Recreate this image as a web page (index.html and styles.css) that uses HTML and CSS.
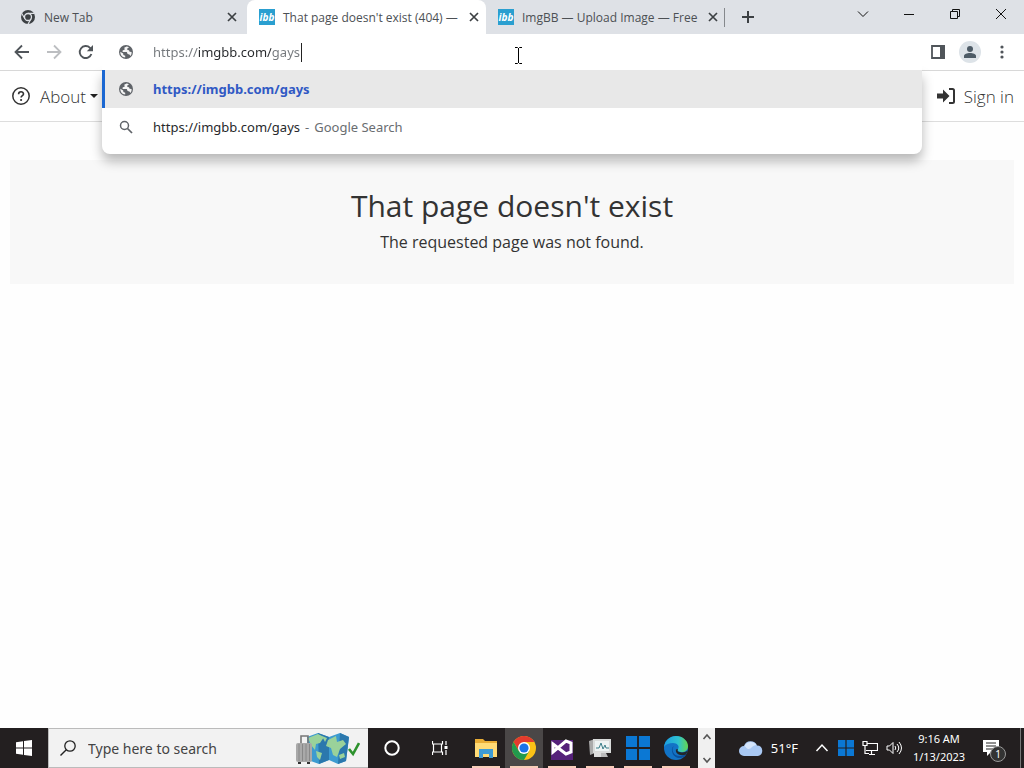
FILE: index.html
```html
<!DOCTYPE html>
<html lang="en">
<head>
<meta charset="utf-8">
<title>That page doesn't exist (404)</title>
<link rel="stylesheet" href="styles.css">
</head>
<body>
<svg class="defs" aria-hidden="true">
  <symbol id="globe" viewBox="0 0 16 16"><circle cx="8" cy="8" r="7" fill="#5f6368"/><path d="M8.6 2.4 6.2 3.8 6.8 5.6 4.6 6.4 4.6 8H8.8L9.6 10 11.4 10.4 12.6 12A5.7 5.7 0 0 0 13.6 8L11.6 7.8 11 6.2 9.4 6 9.2 4.4 11 3.4A6 6 0 0 0 8.6 2.4ZM2.3 7.8A5.7 5.7 0 0 0 7.2 13.6L7.2 11.8 5.4 11 5.2 9.6Z" fill="#f5f5f5"/></symbol>
  <symbol id="close" viewBox="0 0 16 16"><path d="m4 4 8 8m0-8-8 8" stroke="#3c4043" stroke-width="1.7"/></symbol>
  <symbol id="win11" viewBox="0 0 26 26"><path d="M0 0h12v12H0zM14 0h12v12H14zM0 14h12v12H0zM14 14h12v12H14z" fill="#0b78d4"/></symbol>
</svg>

<header class="tabstrip">
  <div class="tabs">
    <div class="tab">
      <svg class="favicon" viewBox="0 0 16 16"><circle cx="8" cy="8" r="7" fill="#3c4043"/><circle cx="8" cy="8" r="3.5" fill="#3c4043" stroke="#dee1e6" stroke-width="1.3"/><path d="M8 4.4h6.4M4.9 9.8 1.8 4.5M11.1 9.8 8 15.1" stroke="#dee1e6" stroke-width="1.1"/></svg>
      <span class="tab-title">New Tab</span>
      <button class="tab-close" aria-label="Close New Tab"><svg viewBox="0 0 16 16"><use href="#close"/></svg></button>
    </div>
    <div class="tab active">
      <span class="favicon ibb">ibb</span>
      <span class="tab-title">That page doesn't exist (404) —</span>
      <button class="tab-close" aria-label="Close tab"><svg viewBox="0 0 16 16"><use href="#close"/></svg></button>
    </div>
    <div class="tab divided">
      <span class="favicon ibb">ibb</span>
      <span class="tab-title">ImgBB — Upload Image — Free</span>
      <button class="tab-close" aria-label="Close ImgBB"><svg viewBox="0 0 16 16"><use href="#close"/></svg></button>
    </div>
    <button class="new-tab" aria-label="New tab"><svg viewBox="0 0 16 16"><path d="M8 2v12M2 8h12" stroke="#3c4043" stroke-width="2"/></svg></button>
  </div>
  <div class="window-controls">
    <button aria-label="Search tabs"><svg viewBox="0 0 16 16"><path d="m3 5.500 5 5 5-5"/></svg></button>
    <button aria-label="Minimize"><svg viewBox="0 0 16 16"><path d="M3 8.500h10"/></svg></button>
    <button aria-label="Restore"><svg viewBox="0 0 16 16"><path d="M3.500 5.500h7v7h-7zM5.500 5V3.500h7v7H11"/></svg></button>
    <button aria-label="Close window"><svg viewBox="0 0 16 16"><path d="m3 3 10 10M13 3 3 13"/></svg></button>
  </div>
</header>

<div class="toolbar">
  <button class="tool" aria-label="Back"><svg viewBox="0 0 16 16"><path d="M15 8H2M8 1.500 1.500 8 8 14.500" fill="none" stroke="#50555a" stroke-width="1.800"/></svg></button>
  <button class="tool" aria-label="Forward" disabled><svg viewBox="0 0 16 16"><path d="M1 8h13M8 1.500 14.500 8 8 14.500" fill="none" stroke="#bcbec1" stroke-width="1.800"/></svg></button>
  <button class="tool" aria-label="Reload"><svg viewBox="0 0 16 16"><path d="M13.400 10A6 6 0 1 1 12 3.800L13.500 5.300" fill="none" stroke="#50555a" stroke-width="1.900"/><path d="M15 1v6.200H8.800z" fill="#50555a"/></svg></button>
  <div class="omnibox">
    <div class="address">
      <svg class="row-icon" viewBox="0 0 16 16"><use href="#globe"/></svg>
      <div class="field">
        <input class="url" type="text" aria-label="Address" value="https://imgbb.com/gays" spellcheck="false">
        <span class="caret"></span>
      </div>
    </div>
    <div class="suggestions">
      <a class="suggestion selected" href="#"><svg class="row-icon" viewBox="0 0 16 16"><use href="#globe"/></svg><span>https://imgbb.com/gays</span></a>
      <a class="suggestion" href="#"><svg class="row-icon" viewBox="0 0 16 16"><circle cx="6.500" cy="6.500" r="4" fill="none" stroke="#5f6368" stroke-width="1.500"/><path d="m9.500 9.500 4.500 4.500" stroke="#5f6368" stroke-width="1.700"/></svg><span class="query"><span>https://imgbb.com/gays</span><span class="hint">-</span><span class="hint">Google Search</span></span></a>
    </div>
    <svg class="pointer" viewBox="0 0 9 17"><path d="M1 .5h2.500l1 1 1-1H8M4.500 1v15M1 16.500h2.500l1-1 1 1H8" fill="none" stroke="#000"/></svg>
  </div>
  <button class="tool" aria-label="Side panel"><svg viewBox="0 0 16 16"><path d="M2 2h12v12H2z" fill="#fff" stroke="#50555a" stroke-width="1.800"/><path d="M10 1h5v14h-5z" fill="#50555a"/></svg></button>
  <button class="tool profile" aria-label="Profile"><svg viewBox="0 0 22 22"><circle cx="11" cy="11" r="11" fill="#dde3e8"/><circle cx="11" cy="8" r="3" fill="#4d5b66"/><path d="M5 17v-2c0-2 3-3 6-3s6 1 6 3v2z" fill="#4d5b66"/></svg></button>
  <button class="tool" aria-label="Menu"><svg viewBox="0 0 16 16" fill="#50555a"><circle cx="8" cy="3" r="1.600"/><circle cx="8" cy="8" r="1.600"/><circle cx="8" cy="13" r="1.600"/></svg></button>
</div>

<nav class="site-nav">
  <a class="nav-link about" href="#"><svg class="help" viewBox="0 0 18 18"><circle cx="9" cy="9" r="8.200" fill="none" stroke="#333" stroke-width="1.500"/><path d="M6.600 7.200C6.600 4 11.500 4 11.500 6.900c0 1.800-2.400 1.700-2.400 3.600" fill="none" stroke="#333" stroke-width="1.600"/><circle cx="9.100" cy="13" r="1.100" fill="#333"/></svg><span>About</span><svg class="arrow" viewBox="0 0 8 4"><path d="M0 0h8L4 4z" fill="#222"/></svg></a>
  <a class="nav-link" href="#"><svg class="signin" viewBox="0 0 20 18"><path d="M1 6.500h6V2.500L13.500 9 7 15.500v-4H1z" fill="#333"/><path d="M13 2h3.500q1.500 0 1.500 1.500v11q0 1.500-1.500 1.500H13" fill="none" stroke="#333" stroke-width="2"/></svg><span>Sign in</span></a>
</nav>

<main class="content">
  <section class="notice">
    <h1>That page doesn't exist</h1>
    <p>The requested page was not found.</p>
  </section>
</main>

<footer class="taskbar">
  <button class="system" aria-label="Start"><svg class="start" viewBox="0 0 16 16"><path d="M0 2.200 7 1.200V7.500H0zM8 1 16 0v7.500H8zM0 8.500h7v6.300L0 13.800zM8 8.500h8V16l-8-1z" fill="#fff"/></svg></button>
  <label class="search">
    <svg class="magnifier" viewBox="0 0 16 16"><circle cx="10" cy="6" r="5.200" fill="none" stroke="#222" stroke-width="1.300"/><path d="M6.300 9.700.500 15.500" stroke="#222" stroke-width="1.400"/></svg>
    <input type="text" aria-label="Search" placeholder="Type here to search">
    <svg class="map" viewBox="0 0 66 34">
      <path d="M13 6 24 2l11 4 11-4 9 4-3 24-8 3-9-4-10 4-11-4z" fill="#3d9bd0"/>
      <path d="m24 2 11 4v23l-10 4zM46 2l9 4-3 24-8 3z" fill="#2b78ad"/>
      <path d="M14 7 24 3l6 3-4 6-4 1-1 6-4-5zM34 9l8-4 1 6 6-2 3 4-6 5-3 8-4-2-2-7-5-2zM22 20l6 2-2 7-3-3zM45 24l5-2 1 4-5 2zM28 5l5 2-2 4z" fill="#9ad29a"/>
      <path d="M7 12V5h7v7" fill="none" stroke="#777" stroke-width="1.600"/>
      <rect x="2" y="12" width="16" height="19" rx="2" fill="#a9a9a9"/>
      <path d="M5 13v17M8.500 13v17M12 13v17M15.500 13v17" stroke="#888"/>
      <path d="M4 31h3v2H4zM13 31h3v2h-3z" fill="#333"/>
      <path d="m55 18 4 5 6-11" fill="none" stroke="#2d922d" stroke-width="2.600"/>
    </svg>
  </label>
  <button class="system" aria-label="Cortana"><svg class="tray" viewBox="0 0 16 16"><circle cx="8" cy="8" r="6.700" fill="none" stroke="#fff" stroke-width="2"/></svg></button>
  <button class="system" aria-label="Task view"><svg class="tray" viewBox="0 0 16 16"><path d="M.5 1v3h10V1M.5 15v-3h10v3M1.500 4.500v7M9.500 4.500v7M14 1v4M14 10v5" fill="none" stroke="#fff" stroke-width="1.200"/><path d="M12.500 6h3v3h-3z" fill="#fff"/></svg></button>
  <div class="apps">
    <button class="app" aria-label="File Explorer"><svg viewBox="0 0 24 24"><path d="M1 3h8l2 2h12v16H1z" fill="#e9ad35"/><path d="M1 7h22v14H1z" fill="#ffdb76"/><path d="M5 13h14v9h-4v-4H9v4H5z" fill="#3d9bd4"/></svg></button>
    <button class="app current" aria-label="Google Chrome"><svg viewBox="0 0 24 24"><circle cx="12" cy="12" r="12" fill="#fbc116"/><path d="M1.600 6A12 12 0 0 1 22.400 6H12L6.800 15z" fill="#e33b2e"/><path d="M1.600 6A12 12 0 0 0 12 24L17.200 15H6.800z" fill="#229a4d"/><circle cx="12" cy="12" r="6" fill="#fff"/><circle cx="12" cy="12" r="4.600" fill="#1a73e8"/></svg></button>
    <button class="app" aria-label="Visual Studio"><svg viewBox="0 0 24 24"><path d="M1 4h22v20H1z" fill="#55217a"/><path d="m3 8 13 10 5-2V7l-5-2L3 16z" fill="none" stroke="#fff" stroke-width="3"/></svg></button>
    <button class="app" aria-label="Performance Monitor"><svg viewBox="0 0 24 24"><path d="m1 5 6-2v14l-5 2z" fill="#aaa"/><path d="M5 3h18v14H5z" fill="#d9dbda"/><path d="M7 5h14v10H7z" fill="#eef3f3"/><path d="M8 12h3l2-5 2 6 2-4 1 3h3" fill="none" stroke="#3d7f8a"/><path d="M11 17h7l2 4h-9z" fill="#bbb"/><path d="M6 16h7v5H6z" fill="#ddd"/></svg></button>
    <button class="app" aria-label="Windows app"><svg viewBox="0 0 26 26"><use href="#win11"/></svg></button>
    <button class="app" aria-label="Microsoft Edge"><svg viewBox="0 0 24 24"><defs><linearGradient id="edge"><stop stop-color="#1b9de2"/><stop offset=".6" stop-color="#2fc2cf"/><stop offset="1" stop-color="#65d64d"/></linearGradient></defs><circle cx="12" cy="12" r="12" fill="#1273c6"/><path d="M0 11C1 4 6 0 12 0c7 0 12 5 12 10 0 4-3 6-6 6-3 0-5-1-4-3 2-3-1-6-5-6-4 0-7 1-9 4z" fill="url(#edge)"/><path d="M10 10c-3 3-1 10 5 10 3 0 5-1 7-2l-1 2c-6 5-14 0-13-7q0-2 2-3z" fill="#0b4f9c"/><path d="M14 13q-2 3 4 3.500 3 0 6-2l-2 4c-6 2-11-1-10-5z" fill="#22272b"/></svg></button>
  </div>
  <div class="scroller">
    <button aria-label="Scroll up"><svg viewBox="0 0 10 10"><path d="m1.500 7 3.500-4 3.500 4"/></svg></button>
    <button aria-label="Scroll down"><svg viewBox="0 0 10 10"><path d="m1.500 3 3.500 4 3.500-4"/></svg></button>
  </div>
  <div class="status">
    <button class="weather"><svg class="cloud" viewBox="0 0 24 16"><path d="M5 16a5 5 0 0 1 0-10 7 7 0 0 1 13-.5A5.300 5.300 0 0 1 19 16z" fill="#a9c8f3"/><path d="M5.500 6a7 7 0 0 1 12-1c-4 0-5 4-8 4-2 0-2-2-4-3z" fill="#d5e5fb"/></svg>51°F</button>
    <button class="indicator" aria-label="Show hidden icons"><svg viewBox="0 0 16 16"><path d="m2.500 11 5.500-6 5.500 6" fill="none" stroke="#fff" stroke-width="1.500"/></svg></button>
    <button class="indicator" aria-label="Windows"><svg viewBox="0 0 26 26"><use href="#win11"/></svg></button>
    <button class="indicator" aria-label="Network"><svg viewBox="0 0 16 16"><path d="M5 3.500h10.500v7H4M1 1.500h4v4H1zM3 5.500v8h4M9.500 11v3M7 14.500h6" fill="none" stroke="#fff" stroke-width="1.200"/></svg></button>
    <button class="indicator" aria-label="Volume"><svg viewBox="0 0 16 16"><path d="M1 6h2.500L7 2.500v11L3.500 10H1zM9 6q1.500 2 0 4M11 4q3.500 4 0 8M13 2q5 6 0 12" fill="none" stroke="#fff"/></svg></button>
    <button class="clock"><span>9:16 AM</span><span>1/13/2023</span></button>
    <button class="notifications" aria-label="1 notification"><svg viewBox="0 0 16 16"><path d="M0 0h16v12H8l-4 4v-4H0z" fill="#fff"/><path d="M3 3h10M3 6h10M3 9h7" stroke="#222"/></svg><span class="count">1</span></button>
    <span class="desktop-edge"></span>
  </div>
</footer>
</body>
</html>
```

FILE: styles.css
```css
* { box-sizing: border-box; }

body {
  margin: 0;
  min-height: 100vh;
  display: flex;
  flex-direction: column;
  background: #fefefe;
  font-family: "Open Sans", "Noto Sans", sans-serif;
  color: #333;
}

button {
  border: 0;
  padding: 0;
  background: none;
  font: inherit;
  color: inherit;
  display: flex;
  align-items: center;
  justify-content: center;
}

a { color: inherit; text-decoration: none; }
svg { display: block; flex: none; }
.defs { position: absolute; width: 0; height: 0; }

/* Tab strip */
.tabstrip {
  height: 34px;
  display: flex;
  justify-content: space-between;
  background: #dee1e6;
  padding-left: 8px;
}
.tabs { display: flex; min-width: 0; }
.tab {
  width: 239px;
  display: flex;
  align-items: center;
  gap: 8px;
  padding: 0 7px 0 12px;
  font-size: 12px;
  color: #4c5054;
  position: relative;
}
.tab.active { background: #fff; border-radius: 8px 8px 0 0; }
.tab.divided::after {
  content: "";
  position: absolute;
  right: 0;
  top: 8px;
  height: 19px;
  border-right: 1px solid #85888c;
}
.favicon { width: 16px; height: 16px; flex: none; }
.ibb {
  background: #2a9fd0;
  color: #fff;
  font: italic bold 10px/16px "Open Sans", sans-serif;
  text-align: center;
}
.tab-title {
  flex: 1;
  white-space: nowrap;
}
.tab-close svg, .new-tab svg { width: 16px; height: 16px; }
.new-tab { width: 46px; }
.window-controls { display: flex; height: 28px; }
.window-controls button { width: 46px; }
.window-controls svg { width: 16px; height: 16px; fill: none; stroke: #111; }

/* Toolbar and address box */
.toolbar {
  height: 37px;
  display: flex;
  padding: 0 6px;
  background: #fff;
  border-bottom: 1px solid #d8d8d8;
}
.tool { width: 32px; height: 36px; }
.tool svg { width: 16px; height: 16px; }
.tool.profile svg { width: 22px; height: 22px; }
.omnibox {
  flex: 1;
  position: relative;
  z-index: 1;
  border-radius: 8px;
  font-family: "Noto Sans", sans-serif;
  font-size: 13px;
}
.address, .suggestion {
  display: flex;
  align-items: center;
  gap: 19px;
  padding-left: 16px;
}
.address {
  height: 36px;
  position: relative;
  z-index: 1;
  background: #fff;
  border-radius: 8px 8px 0 0;
}
.row-icon { width: 16px; height: 16px; }
.field { position: relative; flex: 1; display: flex; align-items: center; }
.url {
  width: 100%;
  border: 0;
  padding: 0;
  outline: 0;
  font: inherit;
  color: transparent;
  background: linear-gradient(to right, #73777b 45px, #27292c 45px 118px, #73777b 118px);
  background-clip: text;
  -webkit-background-clip: text;
}
.caret { position: absolute; left: 148px; width: 1px; height: 19px; background: #222; }
.suggestions {
  position: absolute;
  top: 36px;
  left: 0;
  right: 0;
  padding-bottom: 8px;
  background: #fff;
  border-radius: 0 0 8px 8px;
  box-shadow: 0 7px 12px #00000048;
}
.suggestion { height: 38px; color: #27292c; }
.suggestion.selected {
  background: #e8e8e8;
  box-shadow: inset 3px 0 #1a67d2;
  color: #3059c4;
  font-weight: bold;
}
.query { display: flex; gap: 5px; }
.hint { color: #696d71; }
.pointer { position: absolute; z-index: 2; left: 412px; top: 13px; width: 9px; height: 17px; }

/* Site page */
.site-nav {
  height: 51px;
  display: flex;
  justify-content: space-between;
  align-items: center;
  padding: 0 10px 0 12px;
  border-bottom: 1px solid #ddd;
  background: #fff;
  font-size: 17px;
  font-weight: 300;
}
.nav-link { display: flex; align-items: center; gap: 8px; }
.nav-link.about { gap: 10px; }
.help { width: 18px; height: 18px; }
.arrow { width: 8px; height: 4px; margin-left: -6px; }
.signin { width: 20px; height: 18px; }
.content { flex: 1; padding: 38px 10px 0; }
.notice { padding: 24px 16px 28px; background: #f8f8f8; text-align: center; }
.notice h1 { margin: 0; font-size: 30px; line-height: 44px; font-weight: 400; }
.notice p { margin: 0; font-size: 16px; line-height: 28px; }

/* Taskbar */
.taskbar {
  height: 40px;
  display: flex;
  background: #231f20;
  color: #fff;
  font-family: "Noto Sans", sans-serif;
}
.system { width: 48px; }
.start, .tray { width: 16px; height: 16px; }
.search {
  width: 320px;
  display: flex;
  align-items: center;
  gap: 12px;
  padding: 0 8px 0 11px;
  background: #f2f2f2;
  border: 1px solid #bbb;
  border-right: 0;
}
.magnifier { width: 16px; height: 16px; }
.search input {
  flex: 1;
  min-width: 0;
  border: 0;
  padding: 0;
  background: none;
  font: 14px "Noto Sans", sans-serif;
}
.search input::placeholder { color: #444; opacity: 1; }
.map { width: 66px; height: 34px; }
.apps { display: flex; padding: 0 3px; }
.app { width: 38px; position: relative; }
.app svg { width: 24px; height: 24px; }
.app.current { background: #4a4747; }
.app::after {
  content: "";
  position: absolute;
  left: 5px;
  right: 5px;
  bottom: 0;
  height: 2px;
  background: #f8cdb9;
}
.scroller { width: 17px; background: #f0f0f0; display: flex; flex-direction: column; justify-content: space-between; }
.scroller button { width: 17px; height: 17px; }
.scroller svg { width: 10px; height: 10px; fill: none; stroke: #555; stroke-width: 1.6; }
.status { flex: 1; display: flex; justify-content: flex-end; }
.weather { gap: 8px; font-size: 13px; margin-right: 12px; }
.cloud { width: 24px; height: 16px; }
.indicator { width: 24px; }
.indicator svg { width: 16px; height: 16px; }
.clock { width: 66px; flex-direction: column; font-size: 11px; line-height: 18px; }
.notifications { width: 48px; padding-right: 10px; position: relative; }
.notifications svg { width: 16px; height: 16px; }
.count {
  position: absolute;
  left: 18px;
  top: 18px;
  width: 16px;
  height: 16px;
  border: 1px solid #999;
  border-radius: 50%;
  background: #333;
  font-size: 10px;
  line-height: 14px;
}
.desktop-edge { width: 4px; border-left: 1px solid #777; }
```
